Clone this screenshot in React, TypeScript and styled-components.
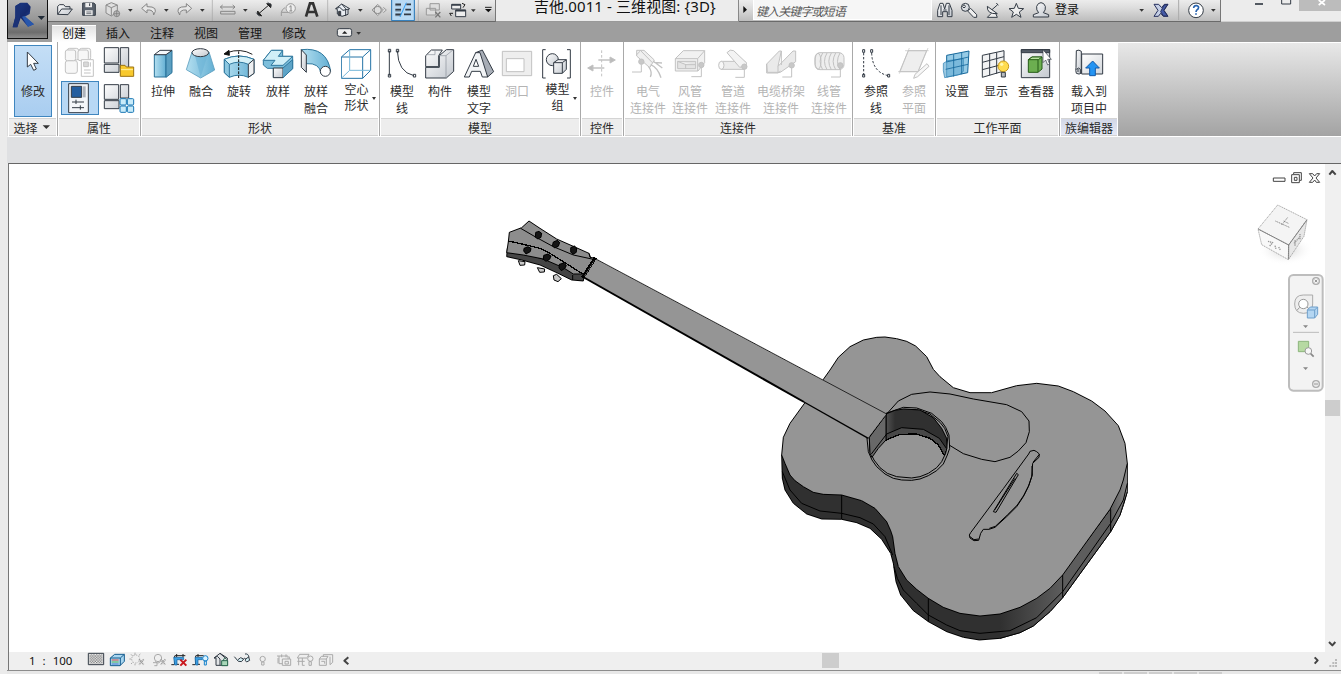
import React from 'react';
import styled, { createGlobalStyle } from 'styled-components';

const Global = createGlobalStyle`
  * { box-sizing: border-box; }
  body { margin: 0; background: #ebebeb; overflow: hidden; }
  svg { display: block; flex: none; }
`;

const Window = styled.div`
  width: 1341px; height: 674px; display: flex; flex-direction: column;
  font: 12px/17px "Noto Sans CJK SC", sans-serif; color: #222; background: #ebebeb;
  padding-left: 7px; overflow: hidden;
`;
const Header = styled.header`display: flex; height: 42px; flex: none; background: #9e9e9e;`;
const AppButton = styled.div`
  width: 41px; height: 39px; flex: none; border: 1px solid #111; border-top: 0;
  background: linear-gradient(#b4b4b4, #989898 50%, #6d6d6d 85%, #8d8d8d);
`;
const HeaderMain = styled.div`flex: 1; display: flex; flex-direction: column;`;
const TitleRow = styled.div`display: flex; height: 22px;`;
const Bar = styled.div<{ $w: number }>`
  width: ${p => p.$w}px; height: 22px; flex: none; display: flex;
  background: linear-gradient(#ececec, #dedede 35%, #bcbcbc);
  border-bottom: 1px solid #6a6a6a; border-right: 1px solid #777; overflow: hidden;
`;
const Title = styled.div`
  width: 243px; flex: none; background: #ececec; border-bottom: 1px solid #999; border-right: 1px solid #888;
  font: 15px/13px "Noto Sans", "Noto Sans CJK SC", sans-serif; letter-spacing: 0.1px; color: #111; padding-left: 38px; white-space: nowrap;
`;
const Search = styled.div`
  width: 179px; height: 20px; flex: none; background: #f6f6f6; border: 1px solid #fff; border-top: 0;
  font-style: italic; font-size: 12px; line-height: 21px; color: #555; padding-left: 2px; letter-spacing: -0.9px;
`;
const Login = styled.div`width: 80px; flex: none; font-size: 12px; line-height: 18px; color: #111; padding-left: 3px;`;
const WinButtons = styled.div`flex: 1; background: #ececec; border-bottom: 1px solid #cfcfcf;`;
const Tabs = styled.nav`display: flex; height: 20px; padding-left: 4px;`;
const Tab = styled.div<{ $on?: boolean }>`
  width: 44px; margin-top: 3px; height: 17px; text-align: center; line-height: 16px; font-size: 12px; color: #161616;
  ${p => p.$on && 'background: linear-gradient(#e2e2e2,#fff); border-top: 1px solid #fff; line-height:14px;'}
`;
const Ribbon = styled.section`
  display: flex; height: 95px; flex: none; border-left: 1px solid #ddd; border-bottom: 1px solid #fff; background: #fff;
`;
const Panel = styled.div<{ $w: number; $last?: boolean }>`
  width: ${p => p.$w}px; flex: none; display: flex; flex-direction: column;
  border-right: ${p => (p.$last ? 0 : 1)}px solid #a9a9a9;
`;
const PanelBody = styled.div<{ $pad: number }>`height: 76px; display: flex; padding-left: ${p => p.$pad}px; padding-top: 3px; white-space: nowrap;`;
const PanelTitle = styled.div<{ $tint?: boolean }>`
  height: 18px; margin: 0 1px; display: flex; justify-content: center; line-height: 17px; color: #2a2a2a;
  border-top: 1px solid #d4d4d4; border-bottom: 1px solid #d2d2d2;
  background: ${p => (p.$tint ? 'linear-gradient(#d2d7e6,#e6eaf6)' : '#ededed')};
`;
const Button = styled.div<{ $w: number; $off?: boolean }>`
  width: ${p => p.$w}px; flex: none; padding-top: 2px; display: flex; flex-direction: column; align-items: center;
  color: ${p => (p.$off ? '#b4b4b4' : '#2d2d2d')};
`;
const Label = styled.div<{ $split?: boolean }>`
  position: relative; margin-top: ${p => (p.$split ? 2 : 3)}px; text-align: center;
  line-height: ${p => (p.$split ? 16 : 17)}px; white-space: pre-line;
`;
const SplitArrow = styled.i`
  position: absolute; right: -7px; top: 16px; border: 2.5px solid transparent; border-top: 3px solid #333; border-bottom: 0;
`;
const Modify = styled.div`
  width: 38px; height: 72px; margin-left: 6px; border: 1px solid #3f86bf;
  background: linear-gradient(#c4def6, #a9cdf0); display: flex; flex-direction: column; align-items: center; gap: 2px; color: #2d2d2d;
`;
const PropGrid = styled.div`display: grid; grid-template-columns: 38px 38px; grid-template-rows: 36px 35px;`;
const PropCell = styled.div<{ $on?: boolean }>`
  display: flex; height: 34px;
  ${p => p.$on && 'background:#b8d8f5; box-shadow: inset 0 0 0 1px #3f86bf;'}
`;
const RibbonRest = styled.div`flex: 1; margin-top: 1px; background: linear-gradient(#e8e8e8, #a3a3a3);`;
const Options = styled.div`height: 26px; flex: none; background: #dfe0e2;`;
const View = styled.main`
  height: 507px; flex: none; margin-left: 1px; display: grid; grid-template-columns: 1316px 1fr; grid-template-rows: 488px 19px;
  border-top: 1px solid #666; border-left: 1px solid #777; background: #efefef;
`;
const Canvas = styled.div`position: relative; background: #fff;`;
const VScroll = styled.div`display: flex; flex-direction: column; background: #f0f0f0;`;
const VThumb = styled.div`height: 16px; width: 15px; margin: 216px 0 216px; background: #cdcdcd;`;
const StatusBar = styled.div`grid-column: 1 / 3; display: flex; height: 18px; background: #efefef;`;
const Scale = styled.div`
  width: 76px; flex: none; padding-left: 20px; font: 11.5px/17px "Noto Sans", sans-serif; color: #111; word-spacing: 4px; white-space: nowrap;
`;
const HTrack = styled.div`flex: 1; display: flex; padding-left: 466px;`;
const HThumb = styled.div`width: 17px; height: 15px; margin: 1px 473px 0 0; background: #cdcdcd;`;
const BottomEdge = styled.div`height: 4px; background: #e8e8e8; border-top: 1px solid #8c8c8c; display: flex; gap: 2px; padding: 1px 0 0 1092px;`;
const Pill = styled.div`width: 23px; height: 2px; flex: none; background: #cecece;`;
const Over = styled.div<{ $x: number; $y: number }>`position: absolute; left: ${p => p.$x}px; top: ${p => p.$y}px;`;

/* Icons are drawn in thirds of a pixel, so a stroke of 3 is one pixel wide. */
type GProps = { x: number; y?: number; w: number; h: number; children?: React.ReactNode };
const Glyph = ({ x, y = 0, w, h, children }: GProps) => (
  <svg width={w} height={h} viewBox={`${x} ${y} ${w * 3} ${h * 3}`} fill="none" stroke="#333b45" strokeWidth={3} strokeLinejoin="round">
    {children}
  </svg>
);
const Q = ({ x, w, children }: { x: number; w: number; children?: React.ReactNode }) => <Glyph x={x} w={w} h={21}>{children}</Glyph>;
const Drop = ({ x, y = 27 }: { x: number; y?: number }) => <path d={`M${x - 7} ${y}h14l-7 8z`} fill="#333" stroke="none" />;

type BProps = { w: number; x: number; label: string; off?: boolean; split?: boolean; children?: React.ReactNode };
const Tool = ({ w, x, label, off, split, children }: BProps) => (
  <Button $w={w} $off={off}>
    <svg width={32} height={32} viewBox={`${x} 141 96 96`} fill="none" stroke={off ? '#c2c2c2' : '#333b45'} strokeWidth={3} strokeLinejoin="round">{children}</svg>
    <Label $split={split}>{label}{split && <SplitArrow />}</Label>
  </Button>
);

const Defs = () => (
  <svg width="0" height="0" style={{ position: 'absolute' }}>
    <defs>
      <linearGradient id="blue" x1="0" y1="0" x2="1" y2="0"><stop offset="0" stopColor="#b4dff0" /><stop offset="1" stopColor="#63afd3" /></linearGradient>
      <linearGradient id="gray" x1="0" y1="0" x2="1" y2="1"><stop offset="0" stopColor="#fdfdfd" /><stop offset="1" stopColor="#c3c8cf" /></linearGradient>
      <linearGradient id="pale" x1="0" y1="0" x2="1" y2="1"><stop offset="0" stopColor="#fff" /><stop offset="1" stopColor="#d2d6db" /></linearGradient>
      <linearGradient id="logo" x1="0" y1="0" x2="1" y2="1"><stop offset="0" stopColor="#1b3d8c" /><stop offset=".5" stopColor="#14296c" /><stop offset="1" stopColor="#2450a8" /></linearGradient>
      <linearGradient id="rimA" gradientUnits="userSpaceOnUse" x1="690" y1="0" x2="878" y2="0"><stop offset="0" stopColor="#303030" /><stop offset="1" stopColor="#5d5d5d" /></linearGradient>
      <linearGradient id="rimB" gradientUnits="userSpaceOnUse" x1="1022" y1="0" x2="1072" y2="0"><stop offset="0" stopColor="#5d5d5d" /><stop offset="1" stopColor="#888" /></linearGradient>
      <linearGradient id="holeWall" gradientUnits="userSpaceOnUse" x1="350" y1="0" x2="400" y2="0"><stop offset="0" stopColor="#505050" /><stop offset=".5" stopColor="#303030" /></linearGradient>
      <radialGradient id="cubeShadow"><stop offset="0" stopColor="#cfcfcf" /><stop offset="1" stopColor="#fff" stopOpacity="0" /></radialGradient>
      <pattern id="checker" width="8" height="8" patternUnits="userSpaceOnUse"><path d="M0 0h4v4H0zM4 4h4v4H4z" fill="#777" /></pattern>
    </defs>
  </svg>
);

const Guitar = () => (
  <svg width="1316" height="488" viewBox="9 164 1316 488" stroke="#000" strokeWidth="3" fill="none" shapeRendering="crispEdges" strokeLinejoin="round">
    <g transform="translate(770 320) scale(.33333)">
      <path fill="#303030" d="M35 405L37 475 45 510 70 550 110 582 155 597 215 598 260 608 300 625 335 658 362 700 370 730 378 785 392 825 430 872 475 905 530 935 580 952 628 960 690 955 750 938 790 918 840 875 878 833 1022 635 1050 585 1062 550 1072 515V430L800 400 500 500z" />
      <path fill="url(#rimA)" stroke="none" d="M690 870L878 765V833L840 875 790 918 750 938 690 954z" />
      <path fill="#5d5d5d" stroke="none" d="M878 765L1022 568V634L878 832z" />
      <path fill="url(#rimB)" stroke="none" d="M1022 568L1072 430V515L1062 550 1050 585 1022 634z" />
      <path d="M37 455L60 510 95 550 150 573 215 580 270 593 310 612 345 650 368 705M372 740L382 775 400 810 440 850 475 885 530 915 570 932 630 940 720 932 800 893 878 815 1022 610 1060 540 1072 490M690 955L750 938 790 918 840 875 878 833 1022 635 1050 585 1072 515" />
      <path fill="#959595" d="M102 252L60 310 40 352 35 405 45 430 60 465 75 482 100 500 130 517 160 523 215 525 275 542 315 565 350 605 362 632 368 650 375 700 385 740 410 780 440 808 475 835 520 862 570 880 630 888 690 882 750 862 800 835 840 805 878 765 1020 568 1050 510 1060 480 1072 430 1065 370 1045 317 1005 273 965 243 910 215 865 198 800 190 740 197 665 218 600 218 550 203 510 170 490 148 470 110 437 78 410 64 380 56 345 51 320 52 280 60 240 80 205 112 180 150 160 178z" />
      <path d="M215 525V598M475 835V905M878 765V833M1022 568V635" />
      <path d="M350 282L385 243 425 223 480 216 540 222 610 237 710 254 755 275 777 303 778 335 768 368 745 393 720 412 675 425 635 418 580 401 539 376" />
      <path fill="#959595" d="M291 355L295 395 306 420 320 440 345 462 370 475 395 480 425 481 450 477 475 467 500 452 520 432 532 405 539 385 537 345 527 322 515 305 485 280 440 264 400 262 348 280z" />
      <path d="M298 352L300 395 312 420 330 443 352 460 380 470 425 474 450 470 475 460 500 443 515 425 527 400 534 350 524 325 510 307 480 282 440 269 400 268 350 282z" />
      <path fill="url(#holeWall)" d="M348 282L375 271 400 267 450 270 490 293 515 325 530 355 531 385 523 406 505 375 480 355 440 342 390 343 348 360z" />
      <path stroke="none" fill="#484848" d="M350 342L395 323 460 328 508 355 529 385 523 404 505 375 480 355 440 342 390 343 350 358z" />
      <path fill="#686868" d="M298 352L348 284V360L325 385 306 412 300 400z" />
      <path d="M304 402L350 342 395 323 460 328 508 355 529 385" />
      <path d="M348 360L390 343 440 342 480 355 505 375 523 406" strokeWidth="4" />
      <path d="M776 402L780 394 792 391 800 395 808 402 807 412 788 430 785 470 775 500 760 530 740 560 710 590 675 622 657 628 640 628 632 640 626 661 612 662 600 654 598 645 602 638 700 506z" />
      <path d="M786 438L787 465 777 495 762 525 742 555 712 585 676 619 658 625 M808 403L789 427M600 650L612 659 626 657" />
      <path d="M740 460L745 464 678 577 670 575z" />
      <path d="M735 475L674 570" />
    </g>
    <path fill="#959595" stroke="none" d="M596 259L886.7 414 868.3 438.3 584 278z" />
    <path strokeWidth="0.75" shapeRendering="auto" d="M596 259L886.7 414L868.3 438.3" />
    <path strokeWidth="2" shapeRendering="auto" d="M584 277.5L804 402" />
    <path strokeWidth="1.4" shapeRendering="auto" d="M804 402L868.3 438.3" />
    <g transform="translate(490 205) scale(.33333)">
      <path fill="#454545" d="M52 130L50 155 95 165 150 180 200 203 245 225 280 228 285 200z" />
      <path fill="#8d8d8d" d="M117 48L95 68 58 82 55 110 50 143 100 150 160 162 220 188 250 207 280 207 317 160 300 157 297 145 250 124 200 102 150 70z" />
      <path d="M92 70L135 95 190 125 250 150 310 163M248 210V225M297 145L302 158" />
      <path strokeWidth="4" d="M55 108L100 118 150 130 175 142 220 170 278 207" />
      <path strokeWidth="10" d="M278 218L316 158" />
      <path stroke="#999" strokeWidth="3" strokeDasharray="5 5" d="M285 212L312 168" />
      <g fill="#151515">
        <path d="M137 82l10-3 8 6-2 12-9 5-8-5zM190 111l12-5 7 7-4 11-11 5-7-7zM242 128l11-5 7 6-1 13-10 6-7-7zM102 130l12-5 9 5-2 10-13 7-7-9zM161 151l13-4 9 6-4 10-11 6-8-6zM208 178l13-4 8 7-4 9-11 7-7-8z" />
      </g>
      <g fill="#c9c9c9"><path d="M85 167l20 3-1 10-14 1zM142 188l22 4-1 9-14 1zM190 212l10-4 14 13-10 9-12-5z" /></g>
    </g>
  </svg>
);

const Sep = ({ x }: { x: number }) => <path d={`M${x} 0V63`} stroke="#a5a5a5" strokeWidth="2" />;
const Connector = ({ x, y, d }: { x: number; y: number; d: string }) => (<><circle cx={x} cy={y} r="8" fill="#c8c8c8" /><path d={d} /></>);

const QuickBar = () => (
  <Bar $w={448}>
    <Q x={144} w={30}><path d="M173 43V19l6-5h12l5 6h14v7M173 43l12-16h32l-13 17z" fill="url(#gray)" /></Q>
    <Q x={234} w={23}><path d="M248 9h33l5 4v33h-38z" fill="#59616c" /><path d="M256 9h20v13h-20zM255 31h23v15h-23z" fill="#eee" stroke="none" /><path d="M269 10v8" /><path d="M259 36h15M259 41h15" strokeWidth="2" /></Q>
    <Q x={303} w={22}><path d="M318 15l16-7 18 7v20l-18 13-16-9zM318 15l16 8 18-8M334 23v24" stroke="#8b8b8b" fill="#ddd" /><circle cx="350" cy="41" r="9" fill="#bbb" stroke="#888" /><path d="M341 41h18M350 32v18" stroke="#777" strokeWidth="2" /></Q>
    <Q x={369} w={15}><Drop x={391} /></Q>
    <Q x={414} w={24}><path d="M441 11l-16 14 16 14v-9q20-2 20 15q17-26-20-25z" fill="#e7e7e7" stroke="#858585" /></Q>
    <Q x={486} w={12}><Drop x={499} /></Q>
    <Q x={522} w={24}><path d="M559 11l16 14-16 14v-9q-20-2-20 15q-17-26 20-25z" fill="#e7e7e7" stroke="#858585" /></Q>
    <Q x={594} w={22}><Drop x={607} /><Sep x={637} /></Q>
    <Q x={660} w={17}><path d="M661 21h44M668 15l-7 6 7 6M698 15l7 6-7 6M662 34h43v8h-43z" stroke="#868686" /></Q>
    <Q x={711} w={14}><Drop x={736} /></Q>
    <Q x={753} w={25}><path d="M774 43l36-31" stroke="#222" /><path d="M800 11l13 1-1 11zM785 48l-12-5V33z" fill="#222" stroke="#222" /><path d="M769 38l10 11M803 7l12 11" /></Q>
    <Q x={828} w={23}><path d="M844 48V37h22M844 37q2-10 11-14" stroke="#999" /><circle cx="872" cy="25" r="14" stroke="#999" fill="#eee" /><path d="M868 21l5-4v16M868 33h9" stroke="#777" strokeWidth="2.5" /></Q>
    <Q x={897} w={28}><path d="M918 50l12-40h9l13 40M923 36h22" stroke="#333" strokeWidth="8" strokeLinejoin="miter" /></Q>
    <Q x={981} w={24}><Sep x={983} /><path d="M1007 26l18-14 24 14-5 3v14l-18 6-14-7V28z" fill="#e9edf2" /><path d="M1025 12l12 14v22M1007 26l12-4 10 9 18-4" /><path d="M1016 34h6v13h-6z" fill="#444" /></Q>
    <Q x={1053} w={18}><Drop x={1081} /></Q>
    <Q x={1107} w={22}><path d="M1116 30l17-17 17 17-17 17zM1150 22l9 8-9 8" fill="#ddd" stroke="#999" /><circle cx="1133" cy="30" r="11" fill="#ddd" stroke="#888" /></Q>
    <Q x={1173} w={24}><path d="M1175 -2h68v64h-68z" fill="#b9daf4" stroke="#2174b7" /><path d="M1186 13h17M1186 29h17M1186 43h17M1219 13h14M1216 29h17M1212 43h21" strokeWidth="5" /><path d="M1186 17h17M1186 33h17M1186 47h17" strokeWidth="1.5" /><path d="M1219 8l-19 43" stroke="#329df2" /></Q>
    <Q x={1245} w={28}><Sep x={1255} /><g stroke="#999" fill="#ddd"><path d="M1290 11h28v19h-28zM1279 25h28v20h-28z" /></g><path d="M1306 36l15 16M1321 36l-15 16" stroke="#777" strokeWidth="4" /></Q>
    <Q x={1329} w={25}><path d="M1355 13h27v14h-27zM1367 30h30v20h-30z" fill="#eee" /><path d="M1355 15h27M1367 32h30" strokeWidth="5" /><path d="M1389 23l6-9-9-4M1354 48l-5-8h10" stroke="#222" /></Q>
    <Q x={1404} w={28}><Drop x={1420} y={28} /><path d="M1455 22h20" stroke="#222" /><path d="M1455 27h20l-10 10z" fill="#111" stroke="none" /></Q>
  </Bar>
);

const Ribbons = () => (
  <Ribbon>
    <Panel $w={50}>
      <PanelBody $pad={0}>
        <Modify>
          <Glyph x={60} y={144} w={26} h={34}><path d="M82 162V207l10-8 9 18 8-4-8-17h14z" fill="#fff" /></Glyph>
          <div>修改</div>
        </Modify>
      </PanelBody>
      <PanelTitle>选择<Glyph x={119} y={357} w={14} h={16}><path d="M133 376h22l-11 11z" fill="#333" stroke="none" /></Glyph></PanelTitle>
    </Panel>
    <Panel $w={83}>
      <PanelBody $pad={3}>
        <PropGrid>
          <PropCell><Glyph x={183} y={135} w={38} h={34}><g stroke="#c3c3c3" fill="#f7f7f7"><rect x="202" y="145" width="34" height="35" rx="7" /><rect x="238" y="145" width="34" height="35" rx="7" /><rect x="196" y="182" width="36" height="38" rx="7" /><rect x="196" y="150" width="31" height="32" rx="6" /><rect x="234" y="150" width="31" height="32" rx="6" /><path d="M244 179h36v50h-36z" fill="#fff" /><path d="M251 186h14v14h-14z" fill="#d8d8d8" /><path d="M252 210h20M252 219h20M271 187v13" /></g></Glyph></PropCell>
          <PropCell><Glyph x={297} y={135} w={38} h={34}><path d="M313 143h43v46h-43zM313 193h44v24h-44zM361 143h25v62h-25z" fill="url(#gray)" /><path d="M361 205v-9h14l4 5h22v28h-40z" fill="#f8c92d" stroke="#9b7212" /><path d="M363 209h36" stroke="#fff0a0" /></Glyph></PropCell>
          <PropCell $on><Glyph x={183} y={243} w={38} h={34}><path d="M206 251h59v87h-59z" fill="#f4f6f9" /><path d="M214 259h31v33h-31z" fill="#245e9f" /><path d="M249 259h8v33h-8z" fill="#aeb3bb" stroke="none" /><path d="M216 306h36M228 299v13M216 323h36M241 316v13" /></Glyph></PropCell>
          <PropCell><Glyph x={297} y={243} w={38} h={34}><path d="M313 254h43v44h-43zM313 302h44v24h-44zM361 254h25v40h-25z" fill="url(#gray)" /><g fill="#c9ebf9" stroke="#1776b4"><rect x="360" y="296" width="19" height="19" rx="3" /><rect x="382" y="296" width="19" height="19" rx="3" /><rect x="360" y="318" width="19" height="19" rx="3" /><rect x="382" y="318" width="19" height="19" rx="3" /></g></Glyph></PropCell>
        </PropGrid>
      </PanelBody>
      <PanelTitle>属性</PanelTitle>
    </Panel>
    <Panel $w={239}>
      <PanelBody $pad={3}>
        <Tool w={38} x={441} label="拉伸"><g stroke="#287198"><path d="M463 164h35v67h-35z" fill="url(#blue)" /><path d="M498 164l18-13v67l-18 14z" fill="#5b9fc1" /></g><path d="M463 164l17-13h36l-18 13z" fill="#f4f7fa" /></Tool>
        <Tool w={38} x={555} label="融合"><path d="M576 156l-17 53 43 25 42-24-17-54z" fill="url(#blue)" stroke="#5c9dbe" strokeWidth="2.5" /><path d="M583 160l19 72 22-71" fill="#6bb3d5" stroke="none" opacity=".6" /><ellipse cx="601" cy="158" rx="25" ry="12" fill="url(#gray)" /></Tool>
        <Tool w={38} x={669} label="旋转"><path d="M673 178q43-20 89 0v42l-17 12q-28-13-57 0l-15-14z" fill="url(#blue)" stroke="#2f789e" /><path d="M673 178q43-20 89 0l-17 15q-28-13-57 0z" fill="#d5f1f8" stroke="#2f789e" /><path d="M673 178l15 15v39l-15-14z" fill="#8cc7e0" stroke="#2f789e" /><path d="M745 193l17-15v42l-17 12z" fill="#eef0f2" /><path d="M716 154v80" stroke="#111" strokeDasharray="8 4" /><path d="M757 163q-35-20-76-5" stroke="#222" /><path d="M687 151l-15 11 16 4z" fill="#111" stroke="#111" /></Tool>
        <Tool w={40} x={786} label="放样"><path d="M790 181l24-30h34v18h30v37l-29 26h-29v-27h-18l-12-10z" fill="#7dbfdc" stroke="#2f789e" /><path d="M790 181l24-30h34l-13 18h43l-29 27h-36l12-15z" fill="#d0eff8" stroke="#2f789e" /><path d="M820 204h29v29h-29z" fill="url(#gray)" /><path d="M849 204l29-25v27l-29 27" fill="#5ea4c7" stroke="#2f789e" /></Tool>
        <Tool w={36} x={900} label={'放样\n融合'}><path d="M904 149q77-9 88 65l-29 7q-4-33-44-30z" fill="url(#blue)" stroke="#2f789e" /><path d="M904 149l15 16v52l-15-15z" fill="url(#gray)" /><circle cx="976" cy="214" r="15" fill="#fff" /></Tool>
        <Tool w={45} x={1023} label={'空心\n形状'} split><path d="M1024 171h64v64h-64zM1049 149h63v62M1024 171l25-22M1088 171l24-22M1088 235l24-24" stroke="#2474a7" /><path d="M1049 149v62h63M1049 211l-25 24" stroke="#75b7d9" /></Tool>
      </PanelBody>
      <PanelTitle>形状</PanelTitle>
    </Panel>
    <Panel $w={201}>
      <PanelBody $pad={3}>
        <Tool w={38} x={33} label={'模型\n线'}><path d="M43 152v75M67 152q2 65 50 75M40 148h7v8h-7zM64 148h7v8h-7zM40 223h7v8h-7zM115 223h7v8h-7z" /></Tool>
        <Tool w={38} x={147} label="构件"><path d="M152 167l17-17h33l-11 17v33h-39zM152 202h41v-35l21-18h22v65l-22 20h-62z" fill="url(#gray)" /><path d="M193 167h20v67M213 167l22-18M180 151v13h-27" stroke="#8a9099" strokeWidth="2" /></Tool>
        <Tool w={40} x={264} label={'模型\n文字'}><path d="M302 158l20-8 34 65-18 16-36-73z" fill="#a7adb6" /><path d="M302 158h13l23 73h-16l-6-17h-26l-7 17h-15zM295 199h16l-8-21z" fill="#f2f4f6" fillRule="evenodd" /></Tool>
        <Tool w={36} x={378} label="洞口" off><path d="M382 154h88v73h-88z" fill="#eee" /><path d="M394 176h53v39h-53z" fill="#fff" /></Tool>
        <Tool w={45} x={501} label={'模型\n组'} split><path d="M512 149h-9v85h9M576 149h10v85h-10" /><circle cx="532" cy="179" r="18" fill="url(#gray)" /><path d="M536 188l13-9h25v29l-12 12h-26z" fill="url(#gray)" /><path d="M536 188h26v32M562 188l12-9" /></Tool>
      </PanelBody>
      <PanelTitle>模型</PanelTitle>
    </Panel>
    <Panel $w={43}>
      <PanelBody $pad={0}><Tool w={42} x={633} label="控件" off><path d="M680 151v80" strokeDasharray="8 6" /><path d="M670 180h40M688 204h-36" strokeWidth="4" /><path d="M705 171l16 9-16 9zM654 195l-16 9 16 9z" fill="#bbb" /></Tool></PanelBody>
      <PanelTitle>控件</PanelTitle>
    </Panel>
    <Panel $w={229}>
      <PanelBody $pad={3}>
        <Tool w={42} x={771} label={'电气\n连接件'} off><path d="M785 151h22l31 29-14 23-39-35zM796 151l36 37M785 164l10-10" fill="#f0f0f0" /><path d="M835 184l27 20M827 194q21 9 31 39M821 200q12 17 5 31M836 187l25 2" strokeWidth="4" /><Connector x={799} y={185} d="M799 193v23h-28" /></Tool>
        <Tool w={42} x={897} label={'风管\n连接件'} off><path d="M901 176l24-24h64v36l-20 25h-68zM901 176h67v37M968 176l21-24" fill="#f1f1f1" /><path d="M908 184h54v22h-54zM908 184l25 10h28M932 194v12" fill="#e4e4e4" /><Connector x={979} y={195} d="M979 203v27h-30" /></Tool>
        <Tool w={44} x={1026} label={'管道\n连接件'} off><path d="M1038 184h72q8 14-2 24h-70z" fill="#ececec" /><path d="M1056 158q9-12 20-6l40 38q-8 12-22 12z" fill="#f3f3f3" /><ellipse cx="1039" cy="196" rx="8" ry="12" fill="#f8f8f8" /><Connector x={1108} y={200} d="M1108 208v24h-27" /></Tool>
        <Tool w={52} x={90} label={'电缆桥架\n连接件'} off><path d="M95 192l38-39h6l-10 46 45-46h8v32l-46 32h-39z" fill="#eaeaea" /><path d="M95 192v27h34v-20M139 153v42M129 219l8-6" /><Connector x={170} y={196} d="M170 204v27h-28" /></Tool>
        <Tool w={44} x={234} label={'线管\n连接件'} off><rect x="240" y="158" width="87" height="51" rx="15" fill="#eee" /><ellipse cx="249" cy="184" rx="9" ry="24" /><path d="M263 159q-15 25 0 50M276 159q-15 25 0 50M289 159q-15 25 0 50M302 159q-15 25 0 50M315 159q-15 25 0 50" /><Connector x={316} y={196} d="M316 204v27h-28" /></Tool>
      </PanelBody>
      <PanelTitle>连接件</PanelTitle>
    </Panel>
    <Panel $w={83}>
      <PanelBody $pad={3}>
        <Tool w={40} x={375} label={'参照\n线'}><path d="M386 159v68M410 159q2 58 50 68" strokeDasharray="7 5" /><path d="M383 149h6v8h-6zM407 149h6v8h-6zM383 223h6v8h-6zM458 223h6v8h-6z" /></Tool>
        <Tool w={36} x={489} label={'参照\n平面'} off><path d="M520 152h55l-26 63h-55z" fill="#eee" /><path d="M510 152h71M489 215h65M523 144l-30 77M579 144l-32 77" strokeWidth="2" /><path d="M536 235l4-12 36-32 6 8-34 31z" fill="#f7f7f7" /></Tool>
      </PanelBody>
      <PanelTitle>基准</PanelTitle>
    </Panel>
    <Panel $w={124}>
      <PanelBody $pad={2}>
        <Tool w={38} x={618} label="设置"><path d="M635 166l67-13-4 65-63 13z" fill="#96cbe6" stroke="#16689b" /><path d="M625 190l13-8 47-6v38l-12 10-44 9q-6-20-4-43z" fill="#6fb0d6" fillOpacity=".7" stroke="#2a7db0" strokeWidth="2" /><path d="M656 163v67M680 157v66M634 186l67-15M632 208l67-15" stroke="#16689b" strokeWidth="2.5" /></Tool>
        <Tool w={40} x={735} label="显示"><path d="M742 166l65-14v61l-65 19z" fill="#f1f2f3" /><path d="M764 161v65M785 157v64M742 187l65-17M742 209l65-17" /><circle cx="805" cy="199" r="16" fill="#ffdc4f" stroke="#c69a1e" /><path d="M799 217h12v14h-12z" fill="#b7bbc0" /><circle cx="800" cy="193" r="5" fill="#fff8b0" stroke="none" /></Tool>
        <Tool w={40} x={855} label="查看器"><path d="M859 149h85v84h-85z" fill="url(#gray)" /><path d="M859 149h85v9h-85z" fill="#555d68" /><path d="M880 179l11-8h30v36l-12 10h-29z" fill="#6cae50" stroke="#255c16" /><path d="M880 179h30l11-8h-30z" fill="#b9e4a1" stroke="#255c16" /><path d="M909 179v37" stroke="#255c16" /><path d="M924 149v39l8-8 6 15 6-3-6-14h11z" fill="#fff" strokeWidth="2" /></Tool>
      </PanelBody>
      <PanelTitle>工作平面</PanelTitle>
    </Panel>
    <Panel $w={58} $last>
      <PanelBody $pad={0}><Tool w={58} x={99} label={'载入到\n项目中'}><path d="M125 162h63v60h-63z" fill="url(#pale)" /><path d="M109 152q8-4 15 2v65q-6 6-15 1-3-9-1-18z" fill="url(#gray)" /><path d="M109 208q8-8 12 0v11M114 207v9" /><path d="M158 183l20 21h-12v23h-17v-23h-12z" fill="#2494f2" stroke="#1259a9" /></Tool></PanelBody>
      <PanelTitle $tint>族编辑器</PanelTitle>
    </Panel>
    <RibbonRest />
  </Ribbon>
);

const StatusIcons = () => (
  <Glyph x={255} y={66} w={271} h={18}>
    <rect x="265" y="70" width="46" height="34" fill="#f4f4f4" /><rect x="268" y="73" width="40" height="28" fill="url(#checker)" stroke="none" />
    <path d="M331 84l13-11h29v21l-13 13h-29z" fill="#a9d6f0" stroke="#155c8e" /><path d="M331 84h30v23M361 84l12-11" stroke="#155c8e" />
    <path d="M335 90h21" stroke="#de4d45" /><path d="M335 96h21" stroke="#56ba55" /><path d="M335 102h21" stroke="#4a77d0" />
    <g stroke="#aaa"><circle cx="407" cy="87" r="12" strokeDasharray="4 4" /><path d="M388 87h6M405 68v7M393 73l5 5M421 72l-5 5M393 102l4-4M405 106v-5" /><path d="M417 88l14 16M431 88l-14 16" stroke="#999" strokeWidth="5" strokeDasharray="3 2" />
      <circle cx="474" cy="84" r="11" /><path d="M459 98h12v9h-8M466 94q8 10 16 0" /><path d="M482 88l14 16M496 88l-14 16" stroke="#999" strokeWidth="5" strokeDasharray="3 2" /></g>
    <g><path d="M514 104h8M524 78v25h13M524 77h32M530 72v9M549 72v9" stroke="#222" /><path d="M521 82h30v7h-20v16h-7z" fill="#3b9fe2" stroke="#145f9d" strokeWidth="2" /><path d="M541 89l18 18M559 89l-18 18" stroke="#c9181e" strokeWidth="6" /></g>
    <g><path d="M577 104h8M587 78v25h13M587 77h24M594 72v9" stroke="#222" /><path d="M585 82h22v7h-13v16h-7z" fill="#3b9fe2" stroke="#145f9d" strokeWidth="2" /><circle cx="616" cy="85" r="8" fill="#d9f2ff" stroke="#1681ca" /><path d="M613 93h6v12h-6z" stroke="#1681ca" /></g>
    <g><path d="M642 84l18-14 22 14v22h-34V84z" fill="#e1e4e6" /><path d="M642 84l10-5 8 8v19M660 70l18 16" /><path d="M665 92h18v15h-18z" fill="#a9d8b9" stroke="#27664c" /><path d="M670 92q3-13 10-4" stroke="#27664c" /></g>
    <path d="M703 80l12 14q11 5 16-7l-9-4-8 6M731 87q3-4 6-1M737 87l9-6 3 10-9 5q-6-3-3-9M735 72q10-2 12 10" fill="#d5f0f5" />
    <g stroke="#aaa"><circle cx="788" cy="87" r="8" /><path d="M785 96h7v9h-7z" /><path d="M831 78h6v23h10M837 78h27v8M845 73v9M858 73v9M834 84v16M847 87h25v19h-25zM855 94h10v8h-10zM868 80v7" />
      <path d="M892 84l7-11h28l-5 9M892 84h29M896 84v22M907 84v22M892 94h22M914 106h-7" /><circle cx="931" cy="86" r="8" /><path d="M927 95h7v11h-7z" />
      <path d="M958 87l6-8h20l-5 8v19h-21zM958 87h21M970 74h28v23l-8 7M970 74v6M990 80v24M964 94h10v7" /></g>
    <path d="M1045 82l-12 10 12 11" stroke="#444" strokeWidth="6" />
  </Glyph>
);

export default function App() {
  return (
    <Window>
      <Global /><Defs />
      <Header>
        <AppButton><Glyph x={24} y={0} w={39} h={38}><path d="M46 18l16-10h20l10 12-3 22-15 8 28 23-18 7-22-26-10 28H38l8-32z" fill="url(#logo)" stroke="none" /><path d="M46 18l16-10-2 42-8 32H38l8-32z" fill="#1b3276" stroke="none" /><path d="M66 50l8-2 28 25-18 7z" fill="#2857ac" stroke="none" /><path d="M113 48h22l-11 12z" fill="#222c38" stroke="none" /></Glyph></AppButton>
        <HeaderMain>
          <TitleRow>
            <QuickBar />
            <Title>吉他.0011 - 三维视图: {'{3D}'}</Title>
            <Bar $w={482}>
              <Q x={15} w={14}><path d="M28 18v21l11-10z" fill="#111" stroke="none" /></Q>
              <Search>键入关键字或短语</Search>
              <Q x={591} w={120}>
                <path d="M608 50V31l7-21h9l5 17 5-17h9l8 21v19h-14V35h-14v15z" fill="url(#gray)" /><path d="M618 16v29M642 16v29M625 30h10" />
                <circle cx="691" cy="22" r="12" fill="url(#gray)" /><circle cx="687" cy="19" r="4" fill="#fff" /><path d="M700 31l7-6 18 19v8h-9l-18-19z" fill="#eee" />
                <path d="M757 19q-2 24 30 22zM771 29l17-15M784 9l6 7M769 40l-12 12h30l-5-12" fill="#eee" />
                <path d="M844 10l6 15 16 1-13 10 5 16-14-9-14 9 5-16-13-10 16-1z" fill="#eee" />
                <path d="M895 51v-7l16-6q-8-7-6-19 4-11 13-11t13 11q2 12-6 19l16 6v7z" fill="url(#gray)" />
              </Q>
              <Login>登录</Login>
              <Q x={276} w={88}>
                <Drop x={305} /><path d="M342 13h14l9 10 8-10h11l-12 18 12 18h-14l-8-9-7 9h-13l12-18z" fill="#c5cfe5" stroke="#26305e" /><path d="M372 15l11-2-12 18 12 17h-13l-8-13z" fill="#455ba8" stroke="#26305e" /><path d="M416 0v60" stroke="#aaa" /><circle cx="468" cy="31" r="22" fill="#fff" /><path d="M461 24q1-8 9-7 9 2 4 10-6 4-6 9M468 40v4" stroke="#2763af" strokeWidth="5" /><Drop x={520} />
              </Q>
            </Bar>
            <WinButtons><Glyph x={543} w={120} h={21}><path d="M645 12h24" strokeWidth="5" /><path d="M725 -5v17h27V-5" /><path d="M777-3h140V33H777z" fill="#bcbcbc" stroke="none" /><path d="M836 0l19 15M855 0l-19 15" stroke="#fff" strokeWidth="5" /></Glyph></WinButtons>
          </TitleRow>
          <Tabs>
            <Tab $on>创建</Tab><Tab>插入</Tab><Tab>注释</Tab><Tab>视图</Tab><Tab>管理</Tab><Tab>修改</Tab>
            <Glyph x={948} y={66} w={50} h={20}><rect x="1012" y="86" width="43" height="23" rx="6" fill="#eee" /><path d="M1026 101h16l-8-8z" fill="#222" stroke="none" /><Drop x={1076} y={96} /></Glyph>
          </Tabs>
        </HeaderMain>
      </Header>
      <Ribbons />
      <Options />
      <View>
        <Canvas>
          <Guitar />
          <Over $x={1261} $y={5}><Glyph x={690} y={507} w={54} h={18}><g stroke="#444"><path d="M700 534h35v10h-35z" /><path d="M761 522v-4h23v23h-5M755 524h23v24h-23zM763 532h8v9h-8z" /><path d="M808 521h10l6 7 6-7h9l-11 13 11 13h-10l-5-7-6 7h-10l11-13z" /></g></Glyph></Over>
          <Over $x={1243} $y={36}>
            <Glyph x={36} y={120} w={64} h={66}><ellipse cx="136" cy="270" rx="84" ry="46" fill="url(#cubeShadow)" stroke="none" /><g stroke="#999" strokeWidth="2.5" strokeDasharray="4 2"><path d="M54 207l59-72 88 44-55 76z" fill="#f4f4f4" /><path d="M54 207l92 48-1 44-80-45z" fill="#f8f8f8" /><path d="M146 255l55-76-9 50-47 70z" fill="#e7e7e7" /><path d="M106 183l42 19M125 195l19-24M131 183l14 7" stroke="#777" /><path d="M84 244l14 4-9 10M105 257l3 10M116 261l5 9M165 241v18M180 222v16M162 250l18-20" strokeWidth="4" /></g><path d="M56 208l90 47v42M146 255l54-74" stroke="#666" strokeWidth="2" /></Glyph>
          </Over>
          <Over $x={1279} $y={110}>
            <Glyph x={144} y={342} w={36} h={118}><rect x="147" y="345" width="101" height="347" rx="13" fill="#f3f3f3" stroke="#bdbdbd" strokeWidth="6" /><circle cx="228" cy="363" r="10" stroke="#aaa" strokeWidth="4" /><path d="M224 359l8 8M232 359l-8 8" stroke="#999" /><path d="M164 432q0-27 26-27h28v27q0 28-28 28-26-1-26-28z" fill="#eee" stroke="#aaa" /><circle cx="190" cy="432" r="14" fill="#fff" stroke="#999" /><path d="M171 451l8-9M201 441l8 7" stroke="#999" /><path d="M202 450l9-9h22v22l-9 11h-22z" fill="#b4d6f2" stroke="#6f9fcb" /><path d="M202 450h22v24M224 450l9-9" stroke="#6f9fcb" /><path d="M189 496h15l-7 8zM189 622h15l-7 8z" fill="#888" stroke="none" /><path d="M159 517h78" stroke="#bbb" /><path d="M175 544h31v31h-31z" fill="#b6d9a2" stroke="#8cb57c" /><circle cx="205" cy="573" r="10" fill="#f7f7f7" stroke="#999" /><path d="M212 581l9 9" stroke="#888" strokeWidth="5" /><circle cx="228" cy="672" r="10" stroke="#aaa" strokeWidth="4" /><path d="M222 670h12M222 674h12" stroke="#999" strokeWidth="2" /></Glyph>
          </Over>
        </Canvas>
        <VScroll>
          <Glyph x={855} y={495} w={15} h={20}><path d="M868 527l9-11 10 11" stroke="#444" strokeWidth="6" /></Glyph>
          <VThumb />
          <Glyph x={1523} y={6} w={16} h={20}><path d="M1535 36l10 10 9-10" stroke="#444" strokeWidth="6" /></Glyph>
        </VScroll>
        <StatusBar>
          <Scale>1 : 100</Scale>
          <StatusIcons />
          <HTrack><HThumb /><Glyph x={1485} y={66} w={26} h={17}><path d="M1493 82l9 9-9 10" stroke="#444" strokeWidth="6" /><path d="M1537 108h6M1546 108h6M1554 108h6M1546 99h6M1554 99h6M1554 90h6" stroke="#bbb" strokeWidth="6" /></Glyph></HTrack>
        </StatusBar>
      </View>
      <BottomEdge><Pill /><Pill /><Pill /><Pill /><Pill /></BottomEdge>
    </Window>
  );
}
